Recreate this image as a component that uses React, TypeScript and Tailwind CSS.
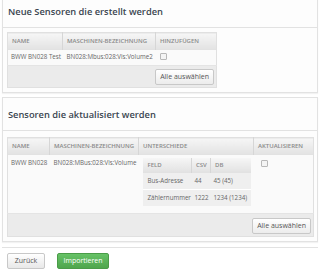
import React from "react";

const head = "bg-gradient-to-b from-[#f6f6f6] to-[#e1e1e1] text-[6px] leading-[8px] font-semibold text-[#8a8a8a] uppercase text-left pl-[4px] p-0 whitespace-nowrap border-r border-[#d6d6d6]";

function Box({ title, children, className }: { title: string; children: React.ReactNode; className?: string }) {
  return (
    <div className={`mx-[2px] border border-[#e2e2e2] bg-[#fdfdfd] shadow-[0_1px_1px_rgba(0,0,0,0.05)] ${className ?? ""}`}>
      <div className="h-[33px] pt-[11px] leading-[12px] pl-[5px] border-b border-[#e2e2e2] text-[9.3px] font-semibold text-[#3a4550] whitespace-nowrap">
        {title}
      </div>
      {children}
    </div>
  );
}

function Check() {
  return <span className="inline-block w-[7px] h-[7px] border border-[#b8b8b8] rounded-[1px] bg-[#f4f4f4]" />;
}

function SelectAll() {
  return (
    <button className="h-[16px] px-[4px] text-[7px] leading-[8px] text-[#555] border border-[#c8c8c8] rounded-[2px] bg-gradient-to-b from-white to-[#ececec] align-middle">
      Alle auswählen
    </button>
  );
}

export default function App() {
  return (
    <div className="w-[320px] h-[272px] overflow-hidden bg-white" style={{ fontFamily: "'Open Sans', sans-serif" }}>
      <Box title="Neue Sensoren die erstellt werden" className="-mt-[6px]">
        <div className="pt-[4px] pb-[4px] pl-[4px]">
          <table className="table-fixed border-collapse w-[209px] border border-[#e0e0e0]">
            <thead>
              <tr className="h-[17px]">
                <th className={`${head} w-[55px]`}>Name</th>
                <th className={`${head} w-[93px]`}>Maschinen-Bezeichnung</th>
                <th className={`${head} w-[61px] border-r-0`}>Hinzufügen</th>
              </tr>
            </thead>
            <tbody>
              <tr className="h-[16px] bg-[#fafafa] text-[6.2px] leading-[8px] text-[#666] border-b border-[#e4e4e4]">
                <td className="pl-[3px] p-0 whitespace-nowrap overflow-hidden">BWW BN028 Test</td>
                <td className="pl-[4px] p-0 whitespace-nowrap overflow-hidden">BN028:Mbus:028:Vis:Volume2</td>
                <td className="pl-[4px] p-0 leading-none"><Check /></td>
              </tr>
              <tr className="h-[22px] bg-[#ebebeb]">
                <td colSpan={3} className="text-right pr-[2px] p-0 leading-none"><SelectAll /></td>
              </tr>
            </tbody>
          </table>
        </div>
      </Box>
      <Box title="Sensoren die aktualisiert werden" className="mt-[4px]">
        <div className="pt-[6px] pb-[4px] pl-[4px]">
          <table className="table-fixed border-collapse w-[306px] border border-[#e0e0e0]">
            <thead>
              <tr className="h-[17px]">
                <th className={`${head} w-[42px]`}>Name</th>
                <th className={`${head} w-[89px]`}>Maschinen-Bezeichnung</th>
                <th className={`${head} w-[115px]`}>Unterschiede</th>
                <th className={`${head} w-[60px] border-r-0`}>Aktualisieren</th>
              </tr>
            </thead>
            <tbody>
              <tr className="h-[59px] bg-[#fafafa] text-[6.2px] leading-[8px] text-[#666] align-top border-b border-[#e4e4e4]">
                <td className="pl-[3px] pt-[4px] whitespace-nowrap overflow-hidden">BWW BN028</td>
                <td className="pl-[4px] pt-[4px] whitespace-nowrap overflow-hidden">BN028:MBus:028:Vis:Volume</td>
                <td className="pl-[4px] pt-[3px] pb-0">
                  <table className="table-fixed border-collapse w-[108px]">
                    <thead>
                      <tr className="h-[15px]">
                        <th className={`${head} w-[49px] pl-[5px]`}>Feld</th>
                        <th className={`${head} w-[19px] pl-[3px]`}>CSV</th>
                        <th className={`${head} w-[40px] border-r-0 pl-[3px]`}>DB</th>
                      </tr>
                    </thead>
                    <tbody className="bg-[#efefef]">
                      <tr className="h-[17px] border-b border-white align-middle">
                        <td className="pl-[5px] whitespace-nowrap">Bus-Adresse</td>
                        <td className="pl-[3px]">44</td>
                        <td className="pl-[3px] whitespace-nowrap">45 (45)</td>
                      </tr>
                      <tr className="h-[16px] align-middle">
                        <td className="pl-[5px] whitespace-nowrap">Zählernummer</td>
                        <td className="pl-[3px]">1222</td>
                        <td className="pl-[3px] whitespace-nowrap">1234 (1234)</td>
                      </tr>
                    </tbody>
                  </table>
                </td>
                <td className="pl-[7px] pt-[5px] leading-none"><Check /></td>
              </tr>
              <tr className="h-[23px] bg-[#ebebeb]">
                <td colSpan={4} className="text-right pr-[2px] p-0 leading-none"><SelectAll /></td>
              </tr>
            </tbody>
          </table>
        </div>
      </Box>
      <div className="mt-[5px] mx-[2px] border-t border-[#e2e2e2] pt-[5px] pl-[5px] flex gap-[12px]">
        <button className="w-[38px] h-[16px] text-[7px] leading-[8px] text-[#555] border border-[#c8c8c8] rounded-[2px] bg-gradient-to-b from-white to-[#e8e8e8]">
          Zurück
        </button>
        <button className="w-[52px] h-[16px] text-[7px] leading-[8px] text-white border border-[#4a9c48] rounded-[2px] bg-gradient-to-b from-[#66c266] to-[#4fa64d]">
          Importieren
        </button>
      </div>
    </div>
  );
}
